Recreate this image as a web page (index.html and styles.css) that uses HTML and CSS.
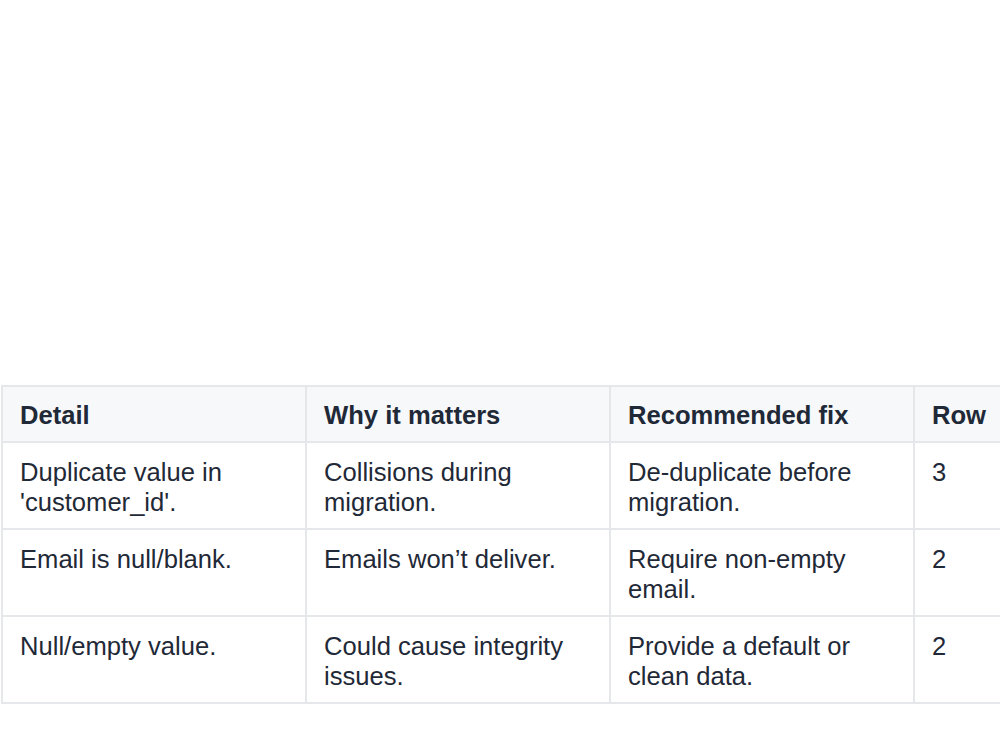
FILE: index.html
```html
<!DOCTYPE html>
<html lang="en">
<head>
<meta charset="utf-8">
<title>Issues</title>
<link rel="stylesheet" href="styles.css">
</head>
<body>
<div class="page">
  <table class="issues">
    <colgroup>
      <col class="col"><col class="col"><col class="col"><col class="col">
    </colgroup>
    <thead>
      <tr>
        <th>Detail</th>
        <th>Why it matters</th>
        <th>Recommended fix</th>
        <th>Row</th>
      </tr>
    </thead>
    <tbody>
      <tr>
        <td>Duplicate value in 'customer_id'.</td>
        <td>Collisions during migration.</td>
        <td>De-duplicate before migration.</td>
        <td>3</td>
      </tr>
      <tr>
        <td>Email is null/blank.</td>
        <td>Emails won’t deliver.</td>
        <td>Require non-empty email.</td>
        <td>2</td>
      </tr>
      <tr>
        <td>Null/empty value.</td>
        <td>Could cause integrity issues.</td>
        <td>Provide a default or clean data.</td>
        <td>2</td>
      </tr>
    </tbody>
  </table>
</div>
</body>
</html>
```

FILE: styles.css
```css
html, body {
  margin: 0;
  padding: 0;
  background: #ffffff;
  overflow: hidden;
}

.page {
  padding-top: 385px;
  padding-left: 1px;
  width: 1300px;
}

.issues {
  border-collapse: collapse;
  table-layout: fixed;
  width: 1216px;
  font-family: "Liberation Sans", Arial, Helvetica, sans-serif;
  font-size: 25.6px;
  line-height: 30px;
  color: #1f2937;
}

.issues .col {
  width: 304px;
}

.issues th,
.issues td {
  border: 2px solid #e5e7eb;
  padding: 14px 17px 11px;
  text-align: left;
  vertical-align: top;
}

.issues th {
  background: #f6f8fa;
  font-weight: 700;
  padding: 13px 17px 11px;
}
```
